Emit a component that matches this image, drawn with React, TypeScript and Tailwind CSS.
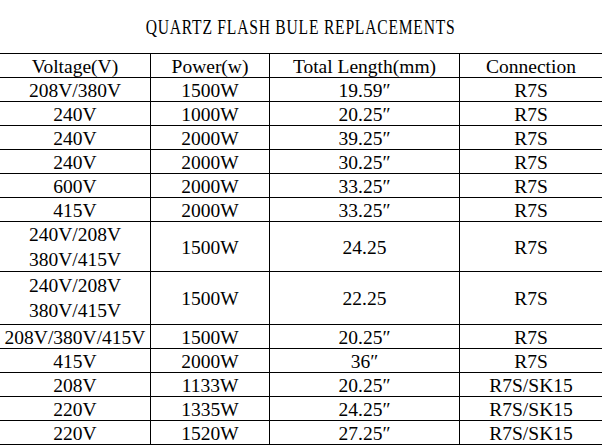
import React from "react";

type Row = {
  voltage: string[];
  power: string;
  length: string;
  connection: string;
  h: string;
};

const rows: Row[] = [
  { voltage: ["208V/380V"], power: "1500W", length: "19.59″", connection: "R7S", h: "h-[24px]" },
  { voltage: ["240V"], power: "1000W", length: "20.25″", connection: "R7S", h: "h-[24px]" },
  { voltage: ["240V"], power: "2000W", length: "39.25″", connection: "R7S", h: "h-[24px]" },
  { voltage: ["240V"], power: "2000W", length: "30.25″", connection: "R7S", h: "h-[24px]" },
  { voltage: ["600V"], power: "2000W", length: "33.25″", connection: "R7S", h: "h-[24px]" },
  { voltage: ["415V"], power: "2000W", length: "33.25″", connection: "R7S", h: "h-[24px]" },
  { voltage: ["240V/208V", "380V/415V"], power: "1500W", length: "24.25", connection: "R7S", h: "h-[50px]" },
  { voltage: ["240V/208V", "380V/415V"], power: "1500W", length: "22.25", connection: "R7S", h: "h-[53px]" },
  { voltage: ["208V/380V/415V"], power: "1500W", length: "20.25″", connection: "R7S", h: "h-[24px]" },
  { voltage: ["415V"], power: "2000W", length: "36″", connection: "R7S", h: "h-[24px]" },
  { voltage: ["208V"], power: "1133W", length: "20.25″", connection: "R7S/SK15", h: "h-[24px]" },
  { voltage: ["220V"], power: "1335W", length: "24.25″", connection: "R7S/SK15", h: "h-[24px]" },
  { voltage: ["220V"], power: "1520W", length: "27.25″", connection: "R7S/SK15", h: "h-[24px]" },
];

const grid = "grid grid-cols-[150px_119px_190px_143px] border-b border-black";

function Cell({ children, first }: { children: React.ReactNode; first?: boolean }) {
  return (
    <div
      className={
        "flex flex-col items-center justify-center text-center whitespace-nowrap leading-[25px] " +
        (first ? "" : "border-l border-black")
      }
    >
      {children}
    </div>
  );
}

export default function App() {
  return (
    <div
      className="w-[602px] h-[445px] bg-white text-black overflow-hidden"
      style={{ fontFamily: '"Liberation Serif", "Noto Sans CJK SC", serif' }}
    >
      {/* Title */}
      <div className="h-[53px] flex items-center justify-center">
        <span className="text-[20px] leading-none tracking-[1px] scale-x-[0.78] whitespace-nowrap">
          QUARTZ FLASH BULE REPLACEMENTS
        </span>
      </div>

      {/* Table */}
      <div className="border-t border-black text-[19.5px]">
        <div className={grid + " h-[24px]"}>
          <Cell first>Voltage(V)</Cell>
          <Cell>Power(w)</Cell>
          <Cell>Total Length(mm)</Cell>
          <Cell>Connection</Cell>
        </div>
        {rows.map((r, i) => (
          <div key={i} className={grid + " " + r.h}>
            <Cell first>
              {r.voltage.map((v) => (
                <span key={v}>{v}</span>
              ))}
            </Cell>
            <Cell>{r.power}</Cell>
            <Cell>{r.length}</Cell>
            <Cell>{r.connection}</Cell>
          </div>
        ))}
      </div>
    </div>
  );
}
